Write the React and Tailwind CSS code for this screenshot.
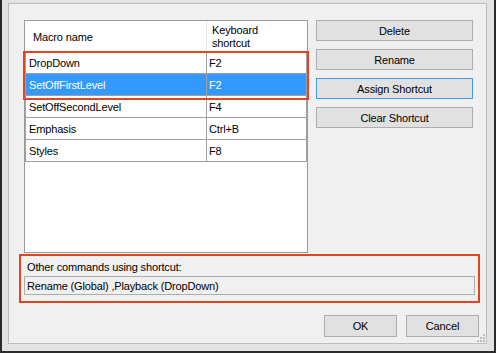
const macros = [
  { name: "DropDown", shortcut: "F2" },
  { name: "SetOffFirstLevel", shortcut: "F2", selected: true },
  { name: "SetOffSecondLevel", shortcut: "F4" },
  { name: "Emphasis", shortcut: "Ctrl+B" },
  { name: "Styles", shortcut: "F8" },
];

const sideButtons = ["Delete", "Rename", "Assign Shortcut", "Clear Shortcut"];

const Grip = () => (
  <svg width="9" height="9" viewBox="0 0 9 9" className="absolute right-[1px] bottom-[1px]">
    {[
      [7, 1],
      [4, 4],
      [7, 4],
      [1, 7],
      [4, 7],
      [7, 7],
    ].map(([x, y]) => (
      <rect key={`${x}-${y}`} x={x} y={y} width="2" height="2" fill="#bcbcbc" />
    ))}
  </svg>
);

const App = () => {
  return (
    <div className="w-[496px] h-[353px] bg-[#e3e3e3] border-x-2 border-b-2 border-[#2b2b2b] pt-[3px] pl-[6px] pr-[7px] pb-[7px] font-['Liberation_Sans',Arial,sans-serif] text-[11px] tracking-[-0.15px] text-black leading-[14px]">
      <div className="relative h-full border border-[#bdbdbd] bg-[#f0f0f0]">
        <div className="flex gap-[8px] pt-[16px] pl-[15px]">
          <div className="relative">
            <div className="w-[284px] h-[233px] bg-white border border-[#9b9b9b]">
              <div className="flex h-[31px] border-b border-[#e5e5e5]">
                <div className="w-[182px] flex items-center pl-[8px] pt-[2px] border-r border-[#e5e5e5]">
                  Macro name
                </div>
                <div className="flex-1 pl-[5px] pt-[3px] leading-[13px]">
                  Keyboard
                  <br />
                  shortcut
                </div>
              </div>
              {macros.map((m) => (
                <div
                  key={m.name}
                  className={`flex h-[22px] border-b border-x border-[#a0a0a0] ${
                    m.selected ? "bg-[#3399ff] text-white" : ""
                  }`}>
                  <div className="w-[181px] flex items-center pl-[3px] pt-[1px] border-r border-[#a0a0a0]">
                    {m.name}
                  </div>
                  <div className="flex-1 flex items-center pl-[2px] pt-[1px]">{m.shortcut}</div>
                </div>
              ))}
            </div>
            <div className="absolute -left-[1px] top-[31px] w-[286px] h-[49px] border-2 border-[#e4431f]" />
          </div>
          <div className="w-[157px] flex flex-col gap-[8px]">
            {sideButtons.map((label) => (
              <button
                key={label}
                className={`h-[21px] bg-[#e1e1e1] border ${
                  label === "Assign Shortcut" ? "border-[#3d9be9]" : "border-[#adadad]"
                }`}>
                {label}
              </button>
            ))}
          </div>
        </div>

        <div className="mt-[1px] ml-[10px] w-[461px] border-2 border-[#e4431f] pt-[4px] pb-[6px] px-[3px]">
          <div className="h-[14px] pl-[3px] mb-[2px]">Other commands using shortcut:</div>
          <div className="h-[19px] border border-[#adadad] bg-[#f0f0f0] flex items-center pl-[2px]">
            Rename (Global) ,Playback (DropDown)
          </div>
        </div>

        <div className="flex justify-end gap-[9px] mt-[12px] pr-[7px]">
          <button className="w-[73px] h-[22px] bg-[#e1e1e1] border border-[#adadad]">OK</button>
          <button className="w-[73px] h-[22px] bg-[#e1e1e1] border border-[#adadad]">Cancel</button>
        </div>

        <Grip />
      </div>
    </div>
  );
};

export default App;
